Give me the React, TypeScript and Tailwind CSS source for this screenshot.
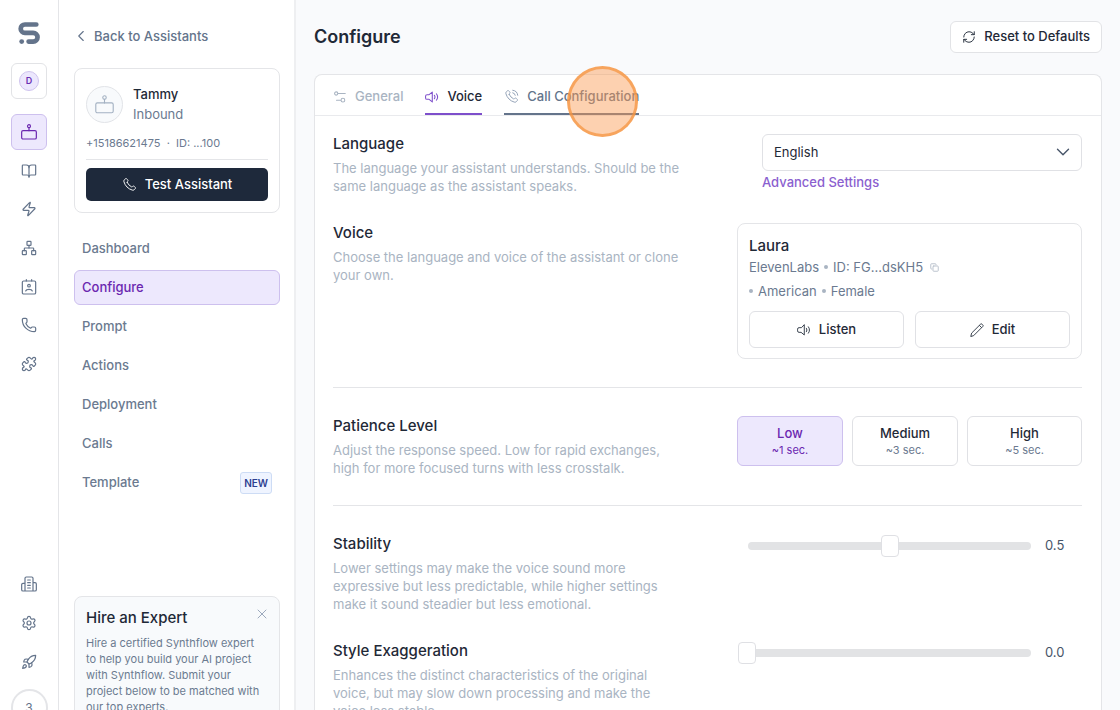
import React, { useState } from 'react';
import {
  BookOpen,
  ChevronDown,
  ChevronLeft,
  Network,
  Phone,
  Puzzle,
  RefreshCw,
  Rocket,
  Settings,
  X,
  Zap,
} from 'lucide-react';

type IconProps = {
  className?: string;
  strokeWidth?: number;
};

const Svg = ({
  className,
  strokeWidth = 1.8,
  children,
}: IconProps & { children: React.ReactNode }) => (
  <svg
    viewBox="0 0 24 24"
    fill="none"
    stroke="currentColor"
    strokeWidth={strokeWidth}
    strokeLinecap="round"
    strokeLinejoin="round"
    className={className}
    aria-hidden="true"
  >
    {children}
  </svg>
);

const Logo = () => (
  <svg viewBox="0 0 22 22" className="h-[22px] w-[22px]" fill="none" aria-hidden="true">
    <path
      d="M18.300 2.500H6.900a4.200 4.200 0 0 0 0 8.400h8.300a4.350 4.350 0 0 1 0 8.700h-4.600"
      stroke="currentColor"
      strokeWidth="4.7"
      strokeLinecap="round"
    />
    <circle cx="3.700" cy="19.600" r="2.400" fill="currentColor" />
  </svg>
);

const Robot = (props: IconProps) => (
  <Svg {...props}>
    <rect x="1" y="10" width="22" height="12.500" rx="2" />
    <path d="M12 10V5.500" />
    <circle cx="12" cy="3.200" r="2.200" />
  </Svg>
);

const IdCard = (props: IconProps) => (
  <Svg {...props}>
    <rect x="2" y="3" width="20" height="19.500" rx="2" />
    <path d="M8 1v2M16 1v2M7 18c.6-1.800 2.400-2.500 5-2.500s4.400.7 5 2.500" />
    <circle cx="12" cy="10" r="2" />
  </Svg>
);

const Building = (props: IconProps) => (
  <Svg {...props}>
    <path d="M6 22.500V3.500a2 2 0 0 1 2-2h8a2 2 0 0 1 2 2v19M6 11H3a2 2 0 0 0-2 2v7.500a2 2 0 0 0 2 2h18a2 2 0 0 0 2-2V12a2 2 0 0 0-2-2h-3" />
    <path d="M10 6h4M10 10h4M10 14h4M10 18h4" />
  </Svg>
);

const Sliders = (props: IconProps) => (
  <Svg {...props}>
    <circle cx="5.500" cy="6" r="2.800" />
    <path d="M8.500 6h12.500M6 17.500h7" />
    <circle cx="17" cy="17.500" r="3.200" />
  </Svg>
);

const Speaker = (props: IconProps) => (
  <Svg {...props}>
    <path d="M12.500 3.500v17L7 16H3.500A2.500 2.500 0 0 1 1 13.500v-3A2.500 2.500 0 0 1 3.500 8H7z" />
    <path d="M16 9c1.300 1.800 1.300 4.200 0 6M19.500 6.500c2.600 3.300 2.600 7.700 0 11" />
  </Svg>
);

const HANDSET =
  'M8.38 8.853a14.600 14.600 0 0 0 6.856 6.857c.125.06.187.09.266.112.28.082.625.023.862-.147.067-.048.124-.105.239-.219.35-.35.524-.525.7-.639a2 2 0 0 1 2.180 0c.176.114.351.29.7.639l.195.195c.532.531.797.797.942 1.082a2 2 0 0 1 0 1.806c-.145.285-.41.551-.942 1.082l-.157.158c-.53.53-.795.794-1.155.997-.4.224-1.020.386-1.478.384-.413-.001-.695-.081-1.260-.241a19 19 0 0 1-8.283-4.874A19 19 0 0 1 3.170 7.761c-.16-.564-.24-.846-.24-1.260-.002-.457.16-1.078.384-1.477.202-.36.467-.625.997-1.155l.157-.157c.532-.532.798-.798 1.083-.942a2 2 0 0 1 1.805 0c.286.144.551.41 1.083.942l.195.195c.35.35.524.524.639.7a2 2 0 0 1 0 2.180c-.115.176-.29.350-.64.7-.114.115-.171.172-.219.239-.17.237-.228.582-.147.862.023.079.053.141.113.266z';

const Handset = (props: IconProps) => (
  <Svg {...props}>
    <path d={HANDSET} />
  </Svg>
);

const HandsetWaves = (props: IconProps) => (
  <Svg {...props}>
    <path d={HANDSET} />
    <path d="M14 6a5 5 0 0 1 4 4M14 2a9 9 0 0 1 8 8" />
  </Svg>
);

const Pencil = (props: IconProps) => (
  <Svg {...props}>
    <path d="M1.500 22.500l1.300-5.200L18 2.100a1.900 1.900 0 0 1 2.700 0l1.200 1.200a1.900 1.900 0 0 1 0 2.700L6.700 21.200zM16.500 4.500l3 3" />
  </Svg>
);

const CopyIcon = (props: IconProps) => (
  <Svg {...props}>
    <rect x="8" y="8" width="14" height="14" rx="2" />
    <path d="M5 16H4a2 2 0 0 1-2-2V4a2 2 0 0 1 2-2h10a2 2 0 0 1 2 2v1" />
  </Svg>
);

const railTop = [
  { label: 'Assistants', icon: Robot },
  { label: 'Knowledge', icon: BookOpen },
  { label: 'Automations', icon: Zap },
  { label: 'Flows', icon: Network },
  { label: 'Contacts', icon: IdCard },
  { label: 'Phone numbers', icon: Phone },
  { label: 'Integrations', icon: Puzzle },
];

const railBottom = [
  { label: 'Company', icon: Building },
  { label: 'Settings', icon: Settings },
  { label: 'Launch', icon: Rocket },
];

const navItems = [
  'Dashboard',
  'Configure',
  'Prompt',
  'Actions',
  'Deployment',
  'Calls',
  'Template',
];

const patienceLevels = [
  { name: 'Low', delay: '~1 sec.' },
  { name: 'Medium', delay: '~3 sec.' },
  { name: 'High', delay: '~5 sec.' },
];

const Rail = () => (
  <nav
    aria-label="Main"
    className="-mb-4 flex w-[59px] shrink-0 flex-col items-center border-r border-[#e4e5e8] pt-[22px] text-[#64748b]"
  >
    <Logo />
    <button
      type="button"
      className="mt-[19px] flex h-9 w-9 shrink-0 items-center justify-center rounded-md border border-[#e2e3e6]"
    >
      <span className="flex h-5 w-5 items-center justify-center rounded-full border border-[#cfc4ee] bg-[#ece7fd] text-[9px] font-semibold text-[#6b2fb3]">
        D
      </span>
    </button>
    <div className="mt-[15px] flex h-[268px] shrink-0 flex-col justify-between">
      {railTop.map(({ label, icon: Icon }, i) => (
        <button
          key={label}
          type="button"
          aria-label={label}
          className={
            i === 0
              ? 'flex h-9 w-9 items-center justify-center rounded-md border border-[#cdc0ee] bg-[#ede8fd] text-[#6b27b0]'
              : 'flex h-9 w-9 items-center justify-center'
          }
        >
          <Icon className="h-4 w-4" strokeWidth={1.8} />
        </button>
      ))}
    </div>
    <div className="mt-auto flex shrink-0 flex-col items-center gap-[3px]">
      {railBottom.map(({ label, icon: Icon }) => (
        <button
          key={label}
          type="button"
          aria-label={label}
          className="flex h-9 w-9 items-center justify-center"
        >
          <Icon className="h-4 w-4" strokeWidth={1.8} />
        </button>
      ))}
      <div className="mt-[6px] flex h-[37px] w-[37px] items-center justify-center rounded-full border-2 border-[#e4e5e8] text-xs">
        3
      </div>
    </div>
  </nav>
);

const AssistantCard = () => (
  <section className="mt-[22px] rounded-lg border border-[#e4e5e8] px-[11px] pt-[15px] pb-[11px]">
    <div className="flex items-center gap-[10px]">
      <div className="flex h-[37px] w-[37px] items-center justify-center rounded-full border border-[#e2e4e8] bg-[#f8fafc] text-[#a3b1c2]">
        <Robot className="h-[19px] w-[19px]" strokeWidth={1.4} />
      </div>
      <div className="text-[13px] leading-5">
        <h2 className="font-medium text-[#1f2937]">Tammy</h2>
        <p className="text-[#6b7a90]">Inbound</p>
      </div>
    </div>
    <p className="mt-[11px] border-b border-[#e4e5e8] pb-2 text-[11px] leading-4 whitespace-pre text-[#6b7a90]">
      +15186621475{'  ·  '}ID: ...100
    </p>
    <button
      type="button"
      className="mt-2 flex h-[33px] w-full items-center justify-center gap-2 rounded-[5px] bg-[#1e293b] text-[13px] font-medium text-white"
    >
      <Handset className="h-[15px] w-[15px]" strokeWidth={1.5} />
      Test Assistant
    </button>
  </section>
);

const Sidebar = () => (
  <aside className="-mb-4 flex w-[237px] shrink-0 flex-col border-r-2 border-[#eeeff1] pt-[26px] pr-[14px] pl-[15px]">
    <a
      href="#assistants"
      className="-ml-[2px] flex items-center gap-1 text-[13px] leading-5 font-medium text-[#64748b]"
    >
      <ChevronLeft className="h-[18px] w-[18px]" strokeWidth={1.5} />
      Back to Assistants
    </a>
    <AssistantCard />
    <nav aria-label="Assistant" className="mt-[18px] flex flex-col gap-1">
      {navItems.map((item) => (
        <a
          key={item}
          href={`#${item.toLowerCase()}`}
          className={
            item === 'Configure'
              ? 'flex h-[35px] items-center rounded-md border border-[#cdc0ee] bg-[#ede8fd] px-[7px] text-[13px] font-medium text-[#6b27b0]'
              : 'flex h-[35px] items-center justify-between px-2 text-[13px] font-medium text-[#6b7a90]'
          }
        >
          {item}
          {item === 'Template' && (
            <span className="rounded-[3px] border border-[#cddcf5] bg-[#eff4ff] px-[3px] text-[10px] leading-5 font-semibold text-[#2d3f91]">
              NEW
            </span>
          )}
        </a>
      ))}
    </nav>
    <section className="mt-auto rounded-lg border border-[#e4e5e8] bg-[#f8fafc] px-[11px] pt-[11px] pb-[10px]">
      <div className="flex justify-between">
        <h2 className="text-[15px] leading-5 font-medium text-[#1f2937]">Hire an Expert</h2>
        <button
          type="button"
          aria-label="Dismiss"
          className="flex h-3 w-3 items-center justify-center text-[#94a3b8]"
        >
          <X className="h-4 w-4 shrink-0" strokeWidth={1.4} />
        </button>
      </div>
      <p className="mt-[7px] pr-1 text-[11px] leading-4 text-[#6b7a90]">
        Hire a certified Synthflow expert to help you build your AI project with Synthflow. Submit
        your project below to be matched with our top experts.
      </p>
    </section>
  </aside>
);

type SettingProps = {
  title: string;
  text: string;
  children: React.ReactNode;
};

const Setting = ({ title, text, children }: SettingProps) => (
  <section className="flex justify-between gap-6">
    <div className="max-w-[350px]">
      <h2 className="text-[15px] leading-5 font-medium text-[#1f2937]">{title}</h2>
      <p className="mt-[5px] text-[13px] leading-[18px] text-[#a9b4c2]">{text}</p>
    </div>
    {children}
  </section>
);

const Dot = () => <span className="h-1 w-1 rounded-full bg-[#a9b4c2]" />;

const Slider = ({ label, initial }: { label: string; initial: number }) => {
  const [value, setValue] = useState(initial);

  return (
    <div className="flex h-6 w-[345px] shrink-0 items-center">
      <div className="ml-px grid flex-1 items-center">
        <div className="col-start-1 row-start-1 mx-[10px] h-2 rounded-full bg-[#e2e3e5]" />
        <input
          type="range"
          aria-label={label}
          min={0}
          max={1}
          step={0.1}
          value={value}
          onChange={(e) => setValue(Number(e.target.value))}
          className="col-start-1 row-start-1 h-[22px] w-full cursor-pointer appearance-none bg-transparent [&::-webkit-slider-thumb]:h-[22px] [&::-webkit-slider-thumb]:w-[18px] [&::-webkit-slider-thumb]:appearance-none [&::-webkit-slider-thumb]:rounded [&::-webkit-slider-thumb]:border [&::-webkit-slider-thumb]:border-[#dfe0e4] [&::-webkit-slider-thumb]:bg-white"
        />
      </div>
      <output className="ml-1 w-[37px] text-[13px] text-[#475569]">{value.toFixed(1)}</output>
    </div>
  );
};

const VoiceCard = () => (
  <div className="w-[345px] shrink-0 rounded-lg border border-[#e4e5e8] px-[11px] pt-3 pb-[10px]">
    <h3 className="text-[15px] leading-5 font-medium text-[#1f2937]">Laura</h3>
    <div className="mt-px flex items-center gap-[5px] text-[13px] leading-5 text-[#6b7a90]">
      ElevenLabs
      <Dot />
      ID: FG...dsKH5
      <button type="button" aria-label="Copy ID" className="ml-[2px] text-[#b4bdc9]">
        <CopyIcon className="h-[9px] w-[9px]" strokeWidth={2.4} />
      </button>
    </div>
    <div className="mt-1 flex items-center gap-[5px] text-[13px] leading-5 text-[#6b7a90]">
      <Dot />
      American
      <Dot />
      Female
    </div>
    <div className="mt-[10px] grid grid-cols-2 gap-[11px]">
      <button
        type="button"
        className="flex h-[37px] items-center justify-center gap-2 rounded-md border border-[#e0e1e5] text-[13px] font-medium text-[#1f2937]"
      >
        <Speaker className="h-[14px] w-[14px]" strokeWidth={1.5} />
        Listen
      </button>
      <button
        type="button"
        className="flex h-[37px] items-center justify-center gap-2 rounded-md border border-[#e0e1e5] text-[13px] font-medium text-[#1f2937]"
      >
        <Pencil className="h-[14px] w-[14px]" strokeWidth={1.5} />
        Edit
      </button>
    </div>
  </div>
);

const Tabs = () => (
  <div
    role="tablist"
    className="flex h-[41px] items-stretch gap-[22px] border-b border-[#e9eaed] px-[18px] text-[13px] font-medium"
  >
    <button
      type="button"
      role="tab"
      className="flex items-center gap-2 border-b-2 border-transparent pt-[5px] text-[#a9b4c2]"
    >
      <Sliders className="h-[14px] w-[14px]" strokeWidth={1.8} />
      General
    </button>
    <button
      type="button"
      role="tab"
      aria-selected="true"
      className="flex items-center gap-2 border-b-2 border-[#7e4fcb] pt-[5px] text-[#1f2937]"
    >
      <Speaker className="h-[14px] w-[14px] text-[#7e4fcb]" strokeWidth={1.8} />
      Voice
    </button>
    <button
      type="button"
      role="tab"
      className="relative flex items-center gap-2 border-b-2 border-[#64748b] pt-[5px] text-[#64748b]"
    >
      <HandsetWaves className="h-[15px] w-[15px] text-[#94a3b8]" strokeWidth={1.6} />
      Call Configuration
      {/* click highlight */}
      <span className="absolute -top-[9px] right-px h-[71px] w-[71px] rounded-full border-[3px] border-[#f59542]/75 bg-[#fb9a50]/45" />
    </button>
  </div>
);

export default function App() {
  const [patience, setPatience] = useState('Low');

  return (
    <div className="flex h-screen overflow-hidden bg-white font-['Inter',sans-serif]">
      <Rail />
      <Sidebar />
      <main className="flex min-w-0 flex-1 flex-col bg-[#f9fafc] px-[18px]">
        <header className="flex h-[74px] shrink-0 items-center justify-between">
          <h1 className="text-lg font-semibold text-[#1f2937]">Configure</h1>
          <button
            type="button"
            className="flex h-8 items-center gap-2 rounded-md border border-[#e2e3e6] bg-white px-[11px] text-[13px] font-medium text-[#1f2937]"
          >
            <RefreshCw className="h-[14px] w-[14px]" strokeWidth={1.6} />
            Reset to Defaults
          </button>
        </header>
        <div className="flex-1 rounded-t-lg border border-b-0 border-[#e4e5e8] bg-white">
          <Tabs />
          <div className="flex flex-col gap-7 pt-[18px] pr-[19px] pl-[18px]">
            <Setting
              title="Language"
              text="The language your assistant understands. Should be the same language as the assistant speaks."
            >
              <div className="h-[61px] w-80 shrink-0">
                <div className="relative">
                  <select
                    aria-label="Language"
                    className="h-[37px] w-full appearance-none rounded-md border border-[#e0e1e5] bg-white px-[11px] text-[13px] text-[#1f2937]"
                  >
                    <option>English</option>
                  </select>
                  <ChevronDown
                    className="pointer-events-none absolute top-[7px] right-2 h-[22px] w-[22px] text-[#475569]"
                    strokeWidth={1.5}
                  />
                </div>
                <a
                  href="#advanced"
                  className="mt-px block text-[13px] leading-5 font-medium text-[#8b5fcf]"
                >
                  Advanced Settings
                </a>
              </div>
            </Setting>
            <Setting
              title="Voice"
              text="Choose the language and voice of the assistant or clone your own."
            >
              <VoiceCard />
            </Setting>
            <hr className="border-[#e4e5e8]" />
            <Setting
              title="Patience Level"
              text="Adjust the response speed. Low for rapid exchanges, high for more focused turns with less crosstalk."
            >
              <div className="flex h-[50px] w-[345px] shrink-0 gap-[9px]">
                {patienceLevels.map(({ name, delay }) => (
                  <button
                    key={name}
                    type="button"
                    aria-pressed={patience === name}
                    onClick={() => setPatience(name)}
                    className={`w-[106px] rounded-md border last:w-[115px] ${
                      patience === name
                        ? 'border-[#cdc0ee] bg-[#ede8fd] text-[#6b27b0]'
                        : 'border-[#e0e1e5] text-[#1f2937]'
                    }`}
                  >
                    <span className="block text-[13px] leading-[18px] font-medium">{name}</span>
                    <span
                      className={`block text-[11px] leading-4 ${
                        patience === name ? '' : 'text-[#6b7a90]'
                      }`}
                    >
                      {delay}
                    </span>
                  </button>
                ))}
              </div>
            </Setting>
            <hr className="border-[#e4e5e8]" />
            <Setting
              title="Stability"
              text="Lower settings may make the voice sound more expressive but less predictable, while higher settings make it sound steadier but less emotional."
            >
              <Slider label="Stability" initial={0.5} />
            </Setting>
            <Setting
              title="Style Exaggeration"
              text="Enhances the distinct characteristics of the original voice, but may slow down processing and make the voice less stable."
            >
              <Slider label="Style Exaggeration" initial={0} />
            </Setting>
          </div>
        </div>
      </main>
    </div>
  );
}
